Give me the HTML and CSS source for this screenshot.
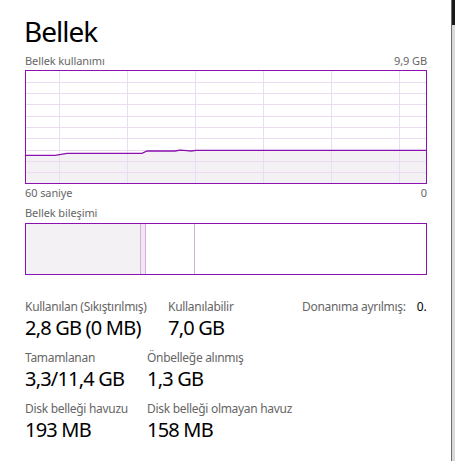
FILE: index.html
```html
<!DOCTYPE html>
<html lang="tr">
<head>
<meta charset="utf-8">
<title>Bellek</title>
<link rel="stylesheet" href="styles.css">
</head>
<body>
<div class="window">
  <main class="panel">
    <h1 class="title">Bellek</h1>
    <div class="row-labels chart-head"><span>Bellek kullanımı</span><span>9,9 GB</span></div>
    <div class="chart">
      <svg width="402" height="114" viewBox="0 0 402 114">
        <polygon class="fill" points="1,85.3 30,85.3 42,83.3 117,83.3 122,81 150,81 155,80.2 162,80.6 166,81 171,80.3 401,80.3 401,113 1,113"/>
        <g class="grid">
          <line x1="34.5" y1="1" x2="34.5" y2="113"/>
          <line x1="102.5" y1="1" x2="102.5" y2="113"/>
          <line x1="170.5" y1="1" x2="170.5" y2="113"/>
          <line x1="238.5" y1="1" x2="238.5" y2="113"/>
          <line x1="306.5" y1="1" x2="306.5" y2="113"/>
          <line x1="374.5" y1="1" x2="374.5" y2="113"/>
          <line x1="1" y1="12.5" x2="401" y2="12.5"/>
          <line x1="1" y1="23.5" x2="401" y2="23.5"/>
          <line x1="1" y1="34.5" x2="401" y2="34.5"/>
          <line x1="1" y1="46.5" x2="401" y2="46.5"/>
          <line x1="1" y1="57.5" x2="401" y2="57.5"/>
          <line x1="1" y1="68.5" x2="401" y2="68.5"/>
          <line x1="1" y1="80.5" x2="401" y2="80.5"/>
          <line x1="1" y1="91.5" x2="401" y2="91.5"/>
          <line x1="1" y1="102.5" x2="401" y2="102.5"/>
        </g>
        <polyline class="line" points="1,85.3 30,85.3 42,83.3 117,83.3 122,81 150,81 155,80.2 162,80.6 166,81 171,80.3 401,80.3"/>
        <rect class="frame" x="0.5" y="0.5" width="401" height="113"/>
      </svg>
    </div>
    <div class="row-labels chart-foot"><span>60 saniye</span><span>0</span></div>
    <div class="row-labels comp-head"><span>Bellek bileşimi</span></div>
    <div class="composition">
      <div class="seg seg-used"></div>
      <div class="seg seg-modified"></div>
      <div class="seg seg-standby"></div>
      <div class="seg seg-free"></div>
    </div>
    <div class="stats">
      <div class="stat-row">
        <div class="stat col-used">
          <div class="stat-label">Kullanılan (Sıkıştırılmış)</div>
          <div class="stat-value">2,8 GB (0 MB)</div>
        </div>
        <div class="stat col-avail">
          <div class="stat-label">Kullanılabilir</div>
          <div class="stat-value">7,0 GB</div>
        </div>
        <div class="stat stat-inline">
          <span class="stat-label">Donanıma ayrılmış:</span>
          <span class="inline-value">0.</span>
        </div>
      </div>
      <div class="stat-row">
        <div class="stat col-first">
          <div class="stat-label">Tamamlanan</div>
          <div class="stat-value">3,3/11,4 GB</div>
        </div>
        <div class="stat">
          <div class="stat-label">Önbelleğe alınmış</div>
          <div class="stat-value">1,3 GB</div>
        </div>
      </div>
      <div class="stat-row">
        <div class="stat col-first">
          <div class="stat-label">Disk belleği havuzu</div>
          <div class="stat-value">193 MB</div>
        </div>
        <div class="stat">
          <div class="stat-label">Disk belleği olmayan havuz</div>
          <div class="stat-value">158 MB</div>
        </div>
      </div>
    </div>
  </main>
  <div class="edge">
    <div class="edge-top"></div>
    <div class="edge-body"></div>
  </div>
</div>
</body>
</html>
```
FILE: styles.css
```css
html, body {
  margin: 0;
  padding: 0;
  background: #ffffff;
}
body {
  font-family: "Noto Sans", "Open Sans", sans-serif;
  color: #000;
}
.window {
  display: flex;
  width: 455px;
  height: 461px;
  overflow: hidden;
}
.panel {
  width: 451px;
  flex: none;
  padding: 0 0 0 25px;
  box-sizing: border-box;
}
.title {
  margin: 12px 0 0 -1px;
  font-size: 28px;
  font-weight: 400;
  letter-spacing: -1px;
  line-height: 39px;
  height: 39px;
}
.row-labels {
  display: flex;
  justify-content: space-between;
  width: 402px;
  font-size: 11px;
  line-height: 15px;
  letter-spacing: -0.1px;
  color: #666666;
  box-sizing: border-box;
}
.chart-head {
  height: 19px;
  padding-top: 2px;
}
.chart {
  width: 402px;
  height: 114px;
}
.chart svg {
  display: block;
}
.fill { fill: #f3f1f4; stroke: none; }
.grid line { stroke: #ecdcf1; stroke-width: 1; }
.line { fill: none; stroke: #8b12ae; stroke-width: 1.3; }
.frame { fill: none; stroke: #8b12ae; stroke-width: 1; }
.chart-foot {
  height: 20px;
  margin-top: 1px;
}
.comp-head {
  height: 18px;
}
.composition {
  display: flex;
  width: 402px;
  height: 52px;
  box-sizing: border-box;
  border: 1px solid #8b12ae;
}
.seg { height: 100%; box-sizing: border-box; }
.seg-used { width: 115px; background: #f3f1f4; border-right: 1px solid #d4b0e0; }
.seg-modified { width: 5px; background: #f1e6f5; border-right: 1px solid #d4b0e0; }
.seg-standby { width: 49px; border-right: 1px solid #d4b0e0; }
.seg-free { flex: 1; }
.stats {
  margin-top: 24px;
  display: flex;
  flex-direction: column;
}
.stat-row {
  display: flex;
  height: 51px;
}
.stat { white-space: nowrap; }
.col-used { width: 143px; flex: none; }
.col-avail { width: 134px; flex: none; }
.col-first { width: 122px; flex: none; }
.stat-label {
  font-size: 12px;
  line-height: 16px;
  letter-spacing: -0.3px;
  color: #666666;
}
.stat-value {
  font-size: 20px;
  line-height: 26px;
  letter-spacing: -0.8px;
  color: #000;
}
.stat-inline {
  display: flex;
  gap: 11px;
}
.inline-value {
  font-size: 12px;
  line-height: 16px;
  color: #000;
}
.edge {
  flex: none;
  width: 4px;
  display: flex;
  flex-direction: column;
  border-left: 1px solid #6e6e6e;
  box-sizing: border-box;
}
.edge-top { height: 25px; background: #1a1a1a; }
.edge-body { flex: 1; background: #d9d9d9; }
```
